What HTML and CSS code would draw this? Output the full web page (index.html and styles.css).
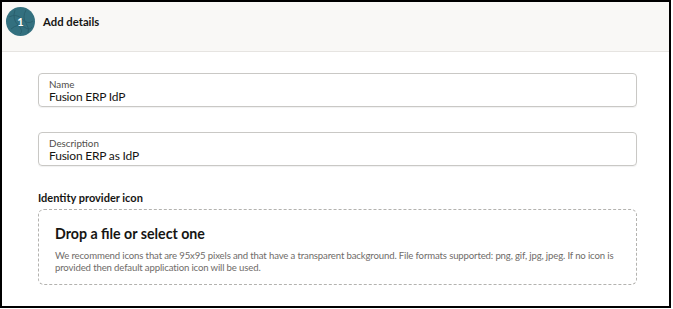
FILE: index.html
```html
<!DOCTYPE html>
<html>
<head>
<meta charset="utf-8">
<link rel="stylesheet" href="styles.css">
</head>
<body>
<div class="frame">
  <div class="header">
    <div class="badge">
      <svg width="29" height="29" viewBox="0 0 29 29">
        <circle cx="14.5" cy="14.5" r="14.5" fill="#33707f"/>
        <g stroke="#2a5f6d" stroke-width="1" fill="none" opacity="0.9">
          <path d="M3 10 Q10 6 16 12 T27 14"/>
          <path d="M5 22 Q12 16 18 20 T26 20"/>
          <path d="M9 3 Q6 12 12 18 T14 27"/>
          <path d="M20 3 Q16 10 20 16 T22 26"/>
        </g>
      </svg>
      <span class="badge-num">1</span>
    </div>
    <div class="title">Add details</div>
  </div>
  <div class="content">
    <div class="field">
      <div class="field-label">Name</div>
      <div class="field-value">Fusion ERP IdP</div>
    </div>
    <div class="field">
      <div class="field-label">Description</div>
      <div class="field-value">Fusion ERP as IdP</div>
    </div>
    <div class="section-label">Identity provider icon</div>
    <div class="dropzone">
      <div class="drop-title">Drop a file or select one</div>
      <div class="drop-text">We recommend icons that are 95x95 pixels and that have a transparent background. File formats supported: png, gif, jpg, jpeg. If no icon is provided then default application icon will be used.</div>
    </div>
  </div>
</div>
</body>
</html>
```
FILE: styles.css
```css
html, body {
  margin: 0;
  padding: 0;
  background: #fff;
}
body {
  font-family: Lato, "Open Sans", sans-serif;
  color: #161513;
}
.frame {
  width: 667px;
  height: 304px;
  border: 2px solid #000;
  overflow: hidden;
}
.header {
  height: 50px;
  background: #f9f8f6;
  border-bottom: 1px solid #e6e4e1;
  display: flex;
  align-items: center;
  padding-left: 4px;
  box-sizing: border-box;
}
.badge {
  position: relative;
  width: 29px;
  height: 29px;
  margin-top: -10px;
}
.badge svg {
  display: block;
}
.badge-num {
  position: absolute;
  inset: 0;
  display: flex;
  align-items: center;
  justify-content: center;
  color: #fff;
  font-size: 11px;
  font-weight: 700;
}
.title {
  margin-left: 8px;
  margin-top: -10px;
  font-size: 11.3px;
  font-weight: 700;
}
.content {
  padding: 21px 0 0 36px;
  width: 599px;
}
.field {
  height: 34px;
  border: 1px solid #c9c8c5;
  border-radius: 4px;
  box-sizing: border-box;
  padding: 4px 10px 0;
  margin-bottom: 25px;
  box-shadow: 0 1px 1px rgba(0,0,0,0.06);
}
.field-label {
  font-size: 9.8px;
  line-height: 12px;
  color: #4f4d4a;
}
.field-value {
  font-size: 12px;
  line-height: 14px;
  letter-spacing: -0.2px;
  color: #161513;
}
.section-label {
  margin-top: 0;
  font-size: 11px;
  font-weight: 700;
  line-height: 14px;
}
.dropzone {
  margin-top: 4px;
  height: 76px;
  border: 1px dashed #b3b2af;
  border-radius: 6px;
  box-sizing: border-box;
  padding: 15px 16px 0;
}
.drop-title {
  font-size: 14.2px;
  font-weight: 700;
  line-height: 18px;
}
.drop-text {
  margin-top: 7px;
  font-size: 9.6px;
  line-height: 12px;
  letter-spacing: -0.15px;
  color: #6f6c69;
}
```
